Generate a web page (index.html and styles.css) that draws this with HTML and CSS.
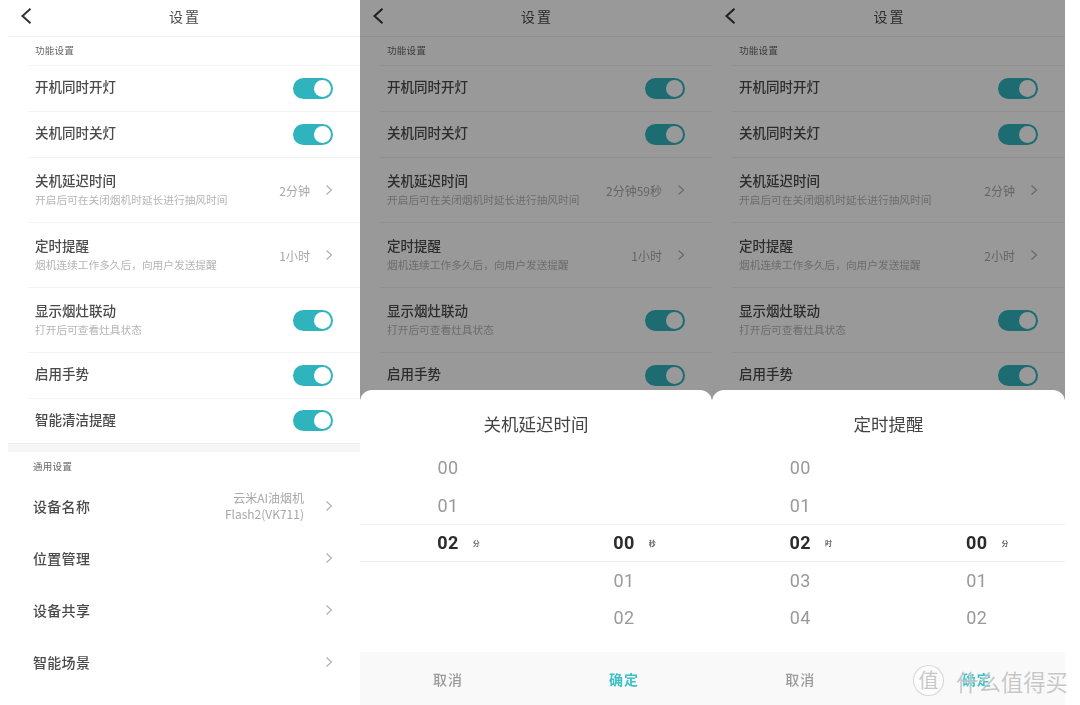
FILE: index.html
```html
<!DOCTYPE html>
<html lang="zh-CN">
<head>
    <meta charset="utf-8">
    <title>设置</title>
    <link rel="stylesheet" href="styles.css">
</head>
<body>
    <svg class="icon-defs" width="0" height="0">
        <symbol id="back" viewBox="0 0 12 16"><path d="M10.500 0.800 2.500 8l8 7.200" fill="none" stroke="currentColor" stroke-width="2"/></symbol>
        <symbol id="more" viewBox="0 0 8 12"><path d="M1.500 1.500 6.500 6l-5 4.500" fill="none" stroke="currentColor" stroke-width="1.200"/></symbol>
    </svg>

    <div class="shots">
        <!-- settings page -->
        <div class="screen screen-first">
            <div class="topbar">
                <svg class="back"><use href="#back"/></svg>
                <span class="topbar-title">设置</span>
            </div>
            <div class="section-label">功能设置</div>
            <div class="row row-s"><div class="row-text"><div class="row-title">开机同时开灯</div></div><span class="toggle"></span></div>
            <div class="row row-s"><div class="row-text"><div class="row-title">关机同时关灯</div></div><span class="toggle"></span></div>
            <div class="row row-l"><div class="row-text"><div class="row-title">关机延迟时间</div><div class="row-sub">开启后可在关闭烟机时延长进行抽风时间</div></div><span class="row-value">2分钟</span><svg class="more"><use href="#more"/></svg></div>
            <div class="row row-l"><div class="row-text"><div class="row-title">定时提醒</div><div class="row-sub">烟机连续工作多久后，向用户发送提醒</div></div><span class="row-value">1小时</span><svg class="more"><use href="#more"/></svg></div>
            <div class="row row-l"><div class="row-text"><div class="row-title">显示烟灶联动</div><div class="row-sub">打开后可查看灶具状态</div></div><span class="toggle"></span></div>
            <div class="row row-s"><div class="row-text"><div class="row-title">启用手势</div></div><span class="toggle"></span></div>
            <div class="row row-s row-last"><div class="row-text"><div class="row-title">智能清洁提醒</div></div><span class="toggle"></span></div>
            <div class="gap"></div>
            <div class="section-label section-general">通用设置</div>
            <div class="row row-g"><div class="row-title">设备名称</div><span class="row-value row-value-two">云米AI油烟机<br>Flash2(VK711)</span><svg class="more"><use href="#more"/></svg></div>
            <div class="row row-g"><div class="row-title">位置管理</div><svg class="more"><use href="#more"/></svg></div>
            <div class="row row-g"><div class="row-title">设备共享</div><svg class="more"><use href="#more"/></svg></div>
            <div class="row row-g"><div class="row-title">智能场景</div><svg class="more"><use href="#more"/></svg></div>
        </div>

        <!-- delay picker -->
        <div class="screen">
            <div class="topbar">
                <svg class="back"><use href="#back"/></svg>
                <span class="topbar-title">设置</span>
            </div>
            <div class="section-label">功能设置</div>
            <div class="row row-s"><div class="row-text"><div class="row-title">开机同时开灯</div></div><span class="toggle"></span></div>
            <div class="row row-s"><div class="row-text"><div class="row-title">关机同时关灯</div></div><span class="toggle"></span></div>
            <div class="row row-l"><div class="row-text"><div class="row-title">关机延迟时间</div><div class="row-sub">开启后可在关闭烟机时延长进行抽风时间</div></div><span class="row-value">2分钟59秒</span><svg class="more"><use href="#more"/></svg></div>
            <div class="row row-l"><div class="row-text"><div class="row-title">定时提醒</div><div class="row-sub">烟机连续工作多久后，向用户发送提醒</div></div><span class="row-value">1小时</span><svg class="more"><use href="#more"/></svg></div>
            <div class="row row-l"><div class="row-text"><div class="row-title">显示烟灶联动</div><div class="row-sub">打开后可查看灶具状态</div></div><span class="toggle"></span></div>
            <div class="row row-s"><div class="row-text"><div class="row-title">启用手势</div></div><span class="toggle"></span></div>
            <div class="dim"></div>
            <div class="sheet">
                <div class="sheet-title">关机延迟时间</div>
                <div class="pick-row"><div class="pick">00</div><div class="pick"></div></div>
                <div class="pick-row"><div class="pick">01</div><div class="pick"></div></div>
                <div class="pick-row pick-row-on">
                    <div class="pick"><b>02</b><i>分</i></div>
                    <div class="pick"><b>00</b><i>秒</i></div>
                </div>
                <div class="pick-row"><div class="pick"></div><div class="pick">01</div></div>
                <div class="pick-row"><div class="pick"></div><div class="pick">02</div></div>
                <div class="sheet-foot">
                    <span class="btn-cancel">取消</span>
                    <span class="btn-ok">确定</span>
                </div>
            </div>
        </div>

        <!-- reminder picker -->
        <div class="screen screen-last">
            <div class="topbar">
                <svg class="back"><use href="#back"/></svg>
                <span class="topbar-title">设置</span>
            </div>
            <div class="section-label">功能设置</div>
            <div class="row row-s"><div class="row-text"><div class="row-title">开机同时开灯</div></div><span class="toggle"></span></div>
            <div class="row row-s"><div class="row-text"><div class="row-title">关机同时关灯</div></div><span class="toggle"></span></div>
            <div class="row row-l"><div class="row-text"><div class="row-title">关机延迟时间</div><div class="row-sub">开启后可在关闭烟机时延长进行抽风时间</div></div><span class="row-value">2分钟</span><svg class="more"><use href="#more"/></svg></div>
            <div class="row row-l"><div class="row-text"><div class="row-title">定时提醒</div><div class="row-sub">烟机连续工作多久后，向用户发送提醒</div></div><span class="row-value">2小时</span><svg class="more"><use href="#more"/></svg></div>
            <div class="row row-l"><div class="row-text"><div class="row-title">显示烟灶联动</div><div class="row-sub">打开后可查看灶具状态</div></div><span class="toggle"></span></div>
            <div class="row row-s"><div class="row-text"><div class="row-title">启用手势</div></div><span class="toggle"></span></div>
            <div class="dim"></div>
            <div class="sheet">
                <div class="sheet-title">定时提醒</div>
                <div class="pick-row"><div class="pick">00</div><div class="pick"></div></div>
                <div class="pick-row"><div class="pick">01</div><div class="pick"></div></div>
                <div class="pick-row pick-row-on">
                    <div class="pick"><b>02</b><i>时</i></div>
                    <div class="pick"><b>00</b><i>分</i></div>
                </div>
                <div class="pick-row"><div class="pick">03</div><div class="pick">01</div></div>
                <div class="pick-row"><div class="pick">04</div><div class="pick">02</div></div>
                <div class="sheet-foot">
                    <span class="btn-cancel">取消</span>
                    <span class="btn-ok">确定</span>
                </div>
            </div>
        </div>
    </div>

    <div class="watermark">
        <span class="watermark-seal">值</span>
        <span class="watermark-text">什么值得买</span>
    </div>
</body>
</html>
```

FILE: styles.css
```css
html, body {
    margin: 0;
    height: 705px;
    overflow: hidden;
    background-color: #ffffff;
    font-family: "Noto Sans CJK SC", "Liberation Sans", sans-serif;
    color: #444444;
}
.icon-defs {
    position: absolute;
}
.shots {
    display: flex;
    height: 705px;
    filter: blur(0.5px);
}
.screen {
    position: relative;
    width: 352px;
    height: 705px;
    overflow: hidden;
    flex-shrink: 0;
    background-color: #ffffff;
}
.screen-first {
    margin-left: 8px;
}
.screen-last {
    width: 353px;
}

/* top bar */
.topbar {
    height: 36px;
    display: flex;
    align-items: center;
    justify-content: center;
    border-bottom: 1px solid #f0f0f0;
    position: relative;
}
.topbar-title {
    font-size: 14px;
    letter-spacing: 2px;
    margin-left: 2px;
    padding-bottom: 4px;
    color: #4a4a4a;
}
.back {
    position: absolute;
    left: 12px;
    top: 8px;
    width: 12px;
    height: 16px;
    color: #333333;
}

/* settings rows */
.section-label {
    height: 28px;
    line-height: 27px;
    padding-left: 27px;
    font-size: 9.500px;
    letter-spacing: 0.300px;
    color: #666666;
    box-sizing: border-box;
}
.section-general {
    padding-left: 25px;
    line-height: 29px;
}
.row {
    display: flex;
    align-items: center;
    margin-left: 20px;
    padding-left: 7px;
    padding-right: 27px;
    border-top: 1px solid #f2f2f2;
    box-sizing: border-box;
}
.row-s {
    height: 46px;
}
.row-s .row-text {
    padding-bottom: 4.500px;
}
.row-l {
    height: 65px;
}
.row-l .row-text {
    padding-bottom: 2px;
}
.row-last {
    height: 44.500px;
}
.row-g {
    height: 52px;
    margin-left: 18px;
    border-top: 0;
}
.row-text {
    flex: 1;
}
.row-title {
    font-size: 13.500px;
    line-height: 18px;
    font-weight: 500;
    color: #4a4a4a;
}
.row-g .row-title {
    flex: 1;
    font-size: 14px;
    letter-spacing: 0.300px;
}
.row-sub {
    font-size: 10.700px;
    line-height: 14px;
    margin-top: 4px;
    color: #b5b5b5;
}
.row-value {
    font-size: 12px;
    color: #a8a8a8;
    margin-right: 15px;
}
.row-value-two {
    text-align: right;
    line-height: 16px;
    margin-right: 21px;
}
.more {
    width: 8px;
    height: 12px;
    color: #b0b0b0;
    flex-shrink: 0;
}
.toggle {
    position: relative;
    width: 40px;
    height: 21px;
    border-radius: 11px;
    background-color: #2fb4bd;
    flex-shrink: 0;
}
.toggle::after {
    content: "";
    position: absolute;
    right: 2px;
    top: 2px;
    width: 17px;
    height: 17px;
    border-radius: 50%;
    background-color: #ffffff;
}
.gap {
    height: 8px;
    background-color: #f6f6f6;
    border-top: 1px solid #eeeeee;
}

/* picker sheet */
.dim {
    position: absolute;
    top: 0;
    left: 0;
    right: 0;
    bottom: 0;
    background-color: rgba(0, 0, 0, 0.4);
}
.sheet {
    position: absolute;
    top: 390px;
    left: 0;
    right: 0;
    bottom: 0;
    background-color: #ffffff;
    border-radius: 12px 12px 0 0;
    display: flex;
    flex-direction: column;
}
.sheet-title {
    height: 59px;
    line-height: 67px;
    text-align: center;
    font-size: 17.500px;
    color: #444444;
    flex-shrink: 0;
}
.pick-row {
    display: grid;
    grid-template-columns: 1fr 1fr;
    height: 37.500px;
    box-sizing: border-box;
    flex-shrink: 0;
}
.pick-row-on {
    border-top: 1px solid #f0f0f0;
    border-bottom: 1px solid #f0f0f0;
}
.pick {
    display: grid;
    grid-template-columns: 1fr auto 1fr;
    align-items: center;
    font-family: Roboto, "Noto Sans CJK SC", sans-serif;
    font-size: 18px;
    letter-spacing: 0.500px;
    color: #999999;
}
.pick::before {
    content: "";
}
.pick b {
    font-weight: 700;
    color: #2b2b2b;
}
.pick i {
    font-family: "Noto Sans CJK SC", sans-serif;
    font-style: normal;
    font-weight: 700;
    font-size: 7px;
    margin-left: 14px;
    color: #666666;
}
.sheet-foot {
    margin-top: auto;
    height: 53px;
    display: grid;
    grid-template-columns: 1fr 1fr;
    align-items: center;
    justify-items: center;
    background-color: #f9f9f9;
    font-size: 14px;
    letter-spacing: 1px;
    font-weight: 500;
}
.btn-cancel {
    color: #9a9a9a;
}
.btn-ok {
    color: #3cc1c9;
    font-weight: 700;
}

/* site watermark */
.watermark {
    position: absolute;
    left: 913px;
    top: 665px;
    display: flex;
    align-items: center;
    gap: 12px;
    color: rgba(175, 175, 175, 0.7);
}
.watermark-seal {
    width: 29px;
    height: 29px;
    line-height: 27px;
    text-align: center;
    font-size: 20px;
    border: 1px solid rgba(200, 200, 200, 0.7);
    border-radius: 50%;
    background-color: rgba(255, 255, 255, 0.5);
}
.watermark-text {
    font-size: 22.400px;
    line-height: 30px;
    text-shadow: 0 0 2px #ffffff;
}
```
